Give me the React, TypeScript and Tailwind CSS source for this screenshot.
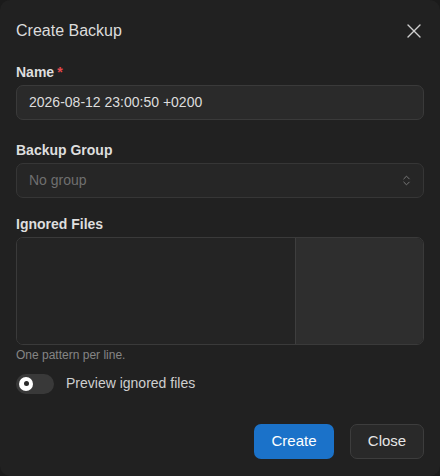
import { X, ChevronsUpDown } from "lucide-react";

const font = { fontFamily: "'Liberation Sans', Arial, sans-serif" };

function Label({ children, required }: { children: string; required?: boolean }) {
  return (
    <label className="mb-[4px] block text-[14px] font-bold leading-[18px] text-[#dedede]">
      {children}
      {required && <span className="ml-[3px] text-[#e5484d]">*</span>}
    </label>
  );
}

export default function App() {
  return (
    <div className="h-[476px] w-[440px] bg-[#1b1b1b]" style={font}>
      <div className="flex h-full w-full flex-col rounded-[10px] bg-[#212121] px-4">
        <div className="flex h-[60px] items-center justify-between pt-px">
          <h2 className="text-[16px] leading-none text-[#dcdcdc]">Create Backup</h2>
          <X className="-mr-[2px] h-6 w-6 text-[#cfcfcf]" strokeWidth={1.4} />
        </div>

        <div className="mt-[3px]">
          <Label required>Name</Label>
          <div className="flex h-[35px] items-center rounded-[7px] border border-[#3a3a3a] bg-[#2a2a2a] px-[12px] text-[14px] text-[#dddddd]">
            2026-08-12 23:00:50 +0200
          </div>
        </div>

        <div className="mt-[21px]">
          <Label>Backup Group</Label>
          <div className="flex h-[35px] items-center justify-between rounded-[7px] border border-[#363636] bg-[#262626] pl-[12px] pr-[10px] text-[14px] text-[#6f6f6f]">
            <span>No group</span>
            <ChevronsUpDown className="h-[13px] w-[13px] text-[#7a7a7a]" strokeWidth={1.8} />
          </div>
        </div>

        <div className="mt-[17px]">
          <Label>Ignored Files</Label>
          <div className="flex h-[108px] overflow-hidden rounded-[7px] border border-[#3a3a3a]">
            <div className="w-[279px] border-r border-[#3e3e3e] bg-[#242424]" />
            <div className="flex-1 bg-[#2e2e2e]" />
          </div>
          <p className="mt-[2px] text-[12px] leading-[16px] text-[#858585]">One pattern per line.</p>
        </div>

        <div className="mt-[10px] flex items-center gap-[12px]">
          <div className="flex h-[20px] w-[38px] items-center rounded-full bg-[#393939] pl-[3px]">
            <div className="flex h-[14px] w-[14px] items-center justify-center rounded-full bg-white">
              <div className="h-[5px] w-[5px] rounded-full bg-[#2a2a2a]" />
            </div>
          </div>
          <span className="text-[14px] text-[#cfcfcf]">Preview ignored files</span>
        </div>

        <div className="mt-auto mb-[17px] flex justify-end gap-[16px]">
          <button className="h-[35px] w-[80px] rounded-[7px] bg-[#1b72c9] text-[15px] text-white">
            Create
          </button>
          <button className="h-[35px] w-[74px] rounded-[7px] border border-[#3d3d3d] bg-[#292929] text-[15px] text-[#e6e6e6]">
            Close
          </button>
        </div>
      </div>
    </div>
  );
}
